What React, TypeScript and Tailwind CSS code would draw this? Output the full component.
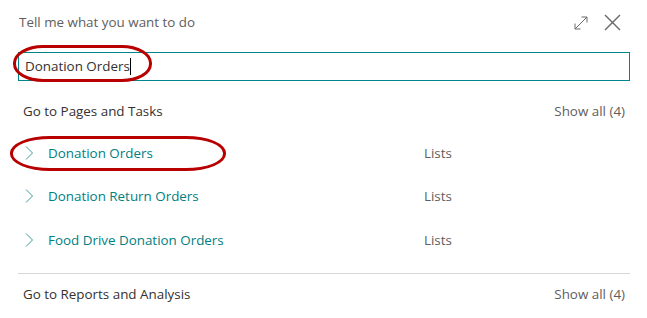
import React from "react";

const rows = ["Donation Orders", "Donation Return Orders", "Food Drive Donation Orders"];

const Chevron = () => (
  <svg width="10" height="16" viewBox="0 0 10 16" fill="none">
    <path d="M2 1.5 L8.5 8 L2 14.5" stroke="#3a9c9c" strokeWidth="1" />
  </svg>
);

const App: React.FC = () => {
  return (
    <div
      className="relative w-[647px] h-[318px] bg-white overflow-hidden"
      style={{ fontFamily: '"Open Sans", "Liberation Sans", sans-serif' }}
    >
      {/* header */}
      <div className="flex items-center justify-between h-[45px] pl-[19px] pr-[26px]">
        <span className="text-[13.4px] text-[#605e5c]">Tell me what you want to do</span>
        <div className="flex items-center gap-[16px]">
          <svg width="14" height="14" viewBox="0 0 14 14" fill="none" stroke="#6b6b6b" strokeWidth="1">
            <path d="M1 13 L13 1" />
            <path d="M7.5 1 H13 V6.5" />
            <path d="M1 7.5 V13 H6.5" />
          </svg>
          <svg width="17" height="17" viewBox="0 0 17 17" fill="none" stroke="#6b6b6b" strokeWidth="1.4">
            <path d="M1 1 L16 16" />
            <path d="M16 1 L1 16" />
          </svg>
        </div>
      </div>

      {/* search box */}
      <div className="mt-[7px] ml-[18px] w-[612px] h-[29px] border border-[#00858a] flex items-center pl-[6px]">
        <span className="text-[13.4px] text-[#323130]">Donation Orders</span>
        <span className="w-px h-[17px] bg-black" />
      </div>

      {/* pages and tasks */}
      <div className="flex items-center justify-between h-[40px] mt-[10px] pl-[23px] pr-[22px]">
        <span className="text-[13.4px] text-[#323130]">Go to Pages and Tasks</span>
        <span className="text-[13.4px] text-[#605e5c]">Show all (4)</span>
      </div>
      <div className="flex flex-col">
        {rows.map((r) => (
          <div key={r} className="flex items-center h-[43.5px] pl-[24px]">
            <Chevron />
            <span className="ml-[14px] w-[376px] text-[13.4px] text-[#00807f]">{r}</span>
            <span className="text-[13.4px] text-[#605e5c]">Lists</span>
          </div>
        ))}
      </div>

      <div className="mt-[11px] ml-[18px] w-[612px] border-t border-[#d6d6d6]" />

      <div className="flex items-center justify-between h-[42px] pl-[23px] pr-[22px]">
        <span className="text-[13.4px] text-[#323130]">Go to Reports and Analysis</span>
        <span className="text-[13.4px] text-[#605e5c]">Show all (4)</span>
      </div>

      {/* annotation ellipses */}
      <div className="absolute left-[13px] top-[45px] w-[139px] h-[37px] rounded-[30px/18px] border-[3px] border-[#b80000]" />
      <div className="absolute left-[10px] top-[136px] w-[216px] h-[35px] rounded-[40px/17px] border-[3px] border-[#b80000]" />
    </div>
  );
};

export default App;
